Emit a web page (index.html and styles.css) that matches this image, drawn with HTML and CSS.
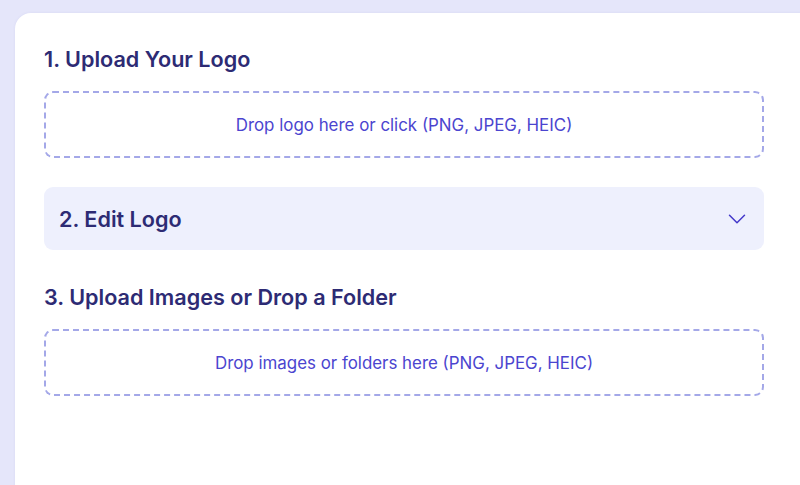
FILE: index.html
```html
<!DOCTYPE html>
<html lang="en">
<head>
<meta charset="utf-8">
<title>Logo Uploader</title>
<link rel="stylesheet" href="styles.css">
</head>
<body>
<main class="card">
  <section class="section">
    <h2 class="heading">1. Upload Your Logo</h2>
    <div class="dropzone">Drop logo here or click (PNG, JPEG, HEIC)</div>
  </section>
  <section class="accordion">
    <h2 class="heading">2. Edit Logo</h2>
    <svg class="chevron" viewBox="0 0 24 24" width="24" height="24" fill="none" stroke="currentColor" stroke-width="1.5" aria-hidden="true"><path stroke-linecap="round" stroke-linejoin="round" d="m19.5 8.25-7.5 7.5-7.5-7.5"/></svg>
  </section>
  <section class="section">
    <h2 class="heading">3. Upload Images or Drop a Folder</h2>
    <div class="dropzone">Drop images or folders here (PNG, JPEG, HEIC)</div>
  </section>
</main>
</body>
</html>
```
FILE: styles.css
```css
html, body {
  margin: 0;
  padding: 0;
  height: 100%;
  overflow: hidden;
}
body {
  background: #e5e6fa;
  font-family: Inter, "Noto Sans", sans-serif;
  padding: 13px 0 0 15px;
  box-sizing: border-box;
}
.card {
  background: #ffffff;
  border-radius: 16px 0 0 0;
  width: 820px;
  height: 480px;
  box-sizing: border-box;
  padding: 32px 0 0 29px;
  box-shadow: 0 0 3px rgba(90, 90, 180, 0.08);
}
.section,
.accordion {
  width: 720px;
}
.heading {
  margin: 0;
  font-size: 21.6px;
  line-height: 28px;
  font-weight: 600;
  color: #2d2b74;
  letter-spacing: 0;
}
.section .heading {
  margin-bottom: 18px;
}
.dropzone {
  height: 67px;
  box-sizing: border-box;
  border: 2px dashed #a4a8e8;
  border-radius: 9px;
  display: flex;
  align-items: center;
  justify-content: center;
  font-size: 16.9px;
  color: #4b45cf;
}
.accordion {
  margin: 29px 0 33px;
  height: 63px;
  box-sizing: border-box;
  background: #eef0fd;
  border-radius: 9px;
  display: flex;
  align-items: center;
  justify-content: space-between;
  padding: 0 15px;
}
.chevron {
  color: #4338ca;
  display: block;
}
```
